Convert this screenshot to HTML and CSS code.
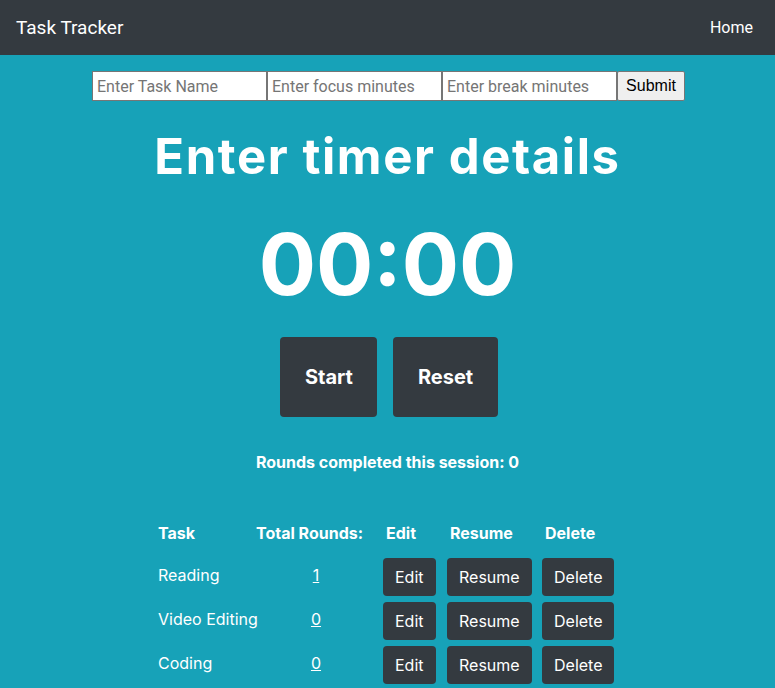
FILE: index.html
```html
<!DOCTYPE html>
<html>
<head>
<meta charset="utf-8">
<title>Task Tracker</title>
<link rel="stylesheet" href="styles.css">
</head>
<body>
<nav class="navbar">
  <span class="brand">Task Tracker</span>
  <a class="nav-link" href="#">Home</a>
</nav>
<main class="main">
  <form class="task-form">
    <input class="field" type="text" placeholder="Enter Task Name">
    <input class="field" type="text" placeholder="Enter focus minutes">
    <input class="field" type="text" placeholder="Enter break minutes">
    <button class="submit" type="button">Submit</button>
  </form>
  <h1 class="title">Enter timer details</h1>
  <div class="clock">00:00</div>
  <div class="controls">
    <button class="big-btn start" type="button">Start</button>
    <button class="big-btn reset" type="button">Reset</button>
  </div>
  <p class="rounds">Rounds completed this session: 0</p>
  <div class="tasks">
    <div class="th first">Task</div>
    <div class="th first">Total Rounds:</div>
    <div class="th">Edit</div>
    <div class="th">Resume</div>
    <div class="th">Delete</div>

    <div class="td name">Reading</div>
    <div class="td num"><a href="#">1</a></div>
    <div class="td"><button class="sm-btn" type="button">Edit</button></div>
    <div class="td"><button class="sm-btn" type="button">Resume</button></div>
    <div class="td"><button class="sm-btn" type="button">Delete</button></div>

    <div class="td name">Video Editing</div>
    <div class="td num"><a href="#">0</a></div>
    <div class="td"><button class="sm-btn" type="button">Edit</button></div>
    <div class="td"><button class="sm-btn" type="button">Resume</button></div>
    <div class="td"><button class="sm-btn" type="button">Delete</button></div>

    <div class="td name">Coding</div>
    <div class="td num"><a href="#">0</a></div>
    <div class="td"><button class="sm-btn" type="button">Edit</button></div>
    <div class="td"><button class="sm-btn" type="button">Resume</button></div>
    <div class="td"><button class="sm-btn" type="button">Delete</button></div>
  </div>
</main>
</body>
</html>
```
FILE: styles.css
```css
* { box-sizing: border-box; }
html, body { margin: 0; padding: 0; }
body {
  background: #17a2b8;
  font-family: Inter, "Noto Sans", sans-serif;
  color: #fff;
  height: 688px;
  overflow: hidden;
}
.navbar {
  height: 55px;
  background: #343a40;
  display: flex;
  align-items: center;
  justify-content: space-between;
  padding: 0 22px 0 16px;
  font-family: Roboto, "Liberation Sans", sans-serif;
}
.brand { font-size: 19px; color: #fff; }
.nav-link { font-size: 16px; color: #fff; text-decoration: none; }
.main { display: flex; flex-direction: column; align-items: center; }
.task-form {
  display: flex;
  margin-top: 16px;
  margin-left: 2px;
}
.field {
  width: 175px;
  height: 30px;
  margin: 0;
  border: 1px solid #767676;
  padding: 1px 4px;
  font-family: Roboto, "Liberation Sans", sans-serif;
  font-size: 16px;
  color: #222;
  background: #fff;
}
.field::placeholder { color: #757575; }
.submit {
  height: 30px;
  width: 68px;
  margin: 0;
  border: 1px solid #767676;
  border-radius: 2px;
  background: #efefef;
  font-family: "Liberation Sans", Arial, sans-serif;
  font-size: 16px;
  color: #000;
  padding: 0 6px;
}
.title {
  font-size: 49px;
  font-weight: 700;
  margin: 27px 0 0;
  line-height: 58px;
  letter-spacing: 1.6px;
}
.clock {
  font-size: 85px;
  font-weight: 700;
  line-height: 106px;
  margin-top: 26px;
}
.controls {
  display: flex;
  gap: 16px;
  margin-top: 19px;
  margin-left: 3px;
}
.big-btn {
  height: 80px;
  background: #343a40;
  color: #fff;
  border: none;
  border-radius: 4px;
  font-family: Inter, sans-serif;
  font-size: 20px;
  font-weight: 700;
  padding: 0 24.5px;
}
.rounds {
  font-size: 16px;
  font-weight: 700;
  margin: 35px 0 0;
  line-height: 20px;
}
.tasks {
  display: grid;
  grid-template-columns: 98px 127px 64px 95px 73px;
  grid-auto-rows: 38px;
  row-gap: 6px;
  margin-top: 42px;
  margin-left: -2px;
}
.th {
  display: flex;
  align-items: center;
  font-weight: 700;
  font-size: 16px;
  padding-left: 3px;
  white-space: nowrap;
}
.th.first { padding-left: 0; }
.td {
  display: flex;
  align-items: center;
  font-size: 16px;
  white-space: nowrap;
}
.td.name { padding-bottom: 4px; }
.td.num { justify-content: center; padding-right: 7px; padding-bottom: 4px; }
.td.num a { color: #fff; }
.sm-btn {
  height: 38px;
  background: #343a40;
  color: #fff;
  border: none;
  border-radius: 4px;
  font-family: Inter, sans-serif;
  font-size: 16px;
  padding: 0 12px;
}
```
